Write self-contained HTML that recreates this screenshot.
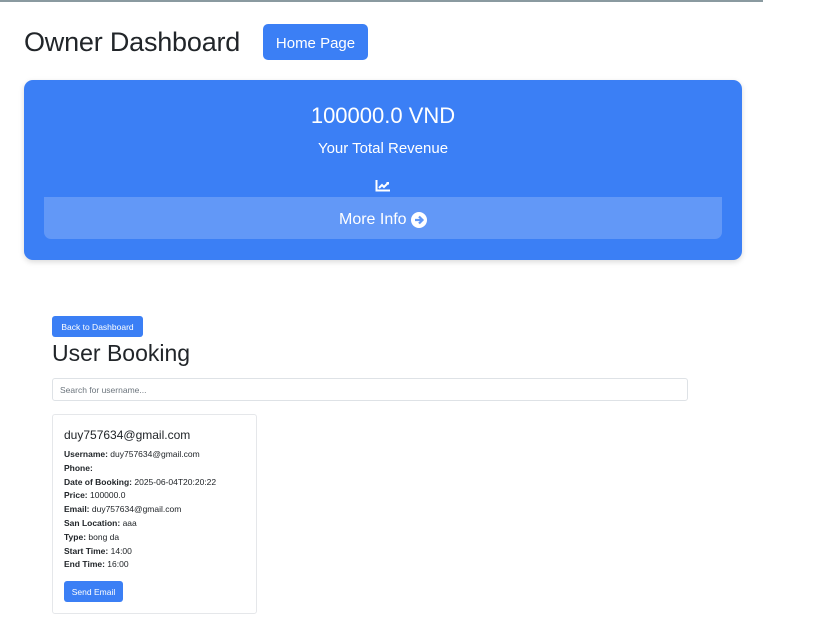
<!DOCTYPE html>
<html><head><style>
*{box-sizing:border-box;margin:0;padding:0}
body{width:817px;height:640px;background:#fff;font-family:"Liberation Sans",sans-serif;color:#212529;position:relative;overflow:hidden}
.a{position:absolute}
.btn{background:#3b7ff5;color:#fff;border-radius:4px;display:flex;align-items:center;justify-content:center}
</style></head><body>
<div class="a" style="left:0;top:0;width:763px;height:2px;background:#8a9aa0"></div>
<div class="a" style="left:24px;top:27px;font-size:27px;font-weight:500;letter-spacing:-0.2px">Owner Dashboard</div>
<div class="a btn" style="left:263px;top:24px;width:105px;height:36px;font-size:15px;border-radius:5px;padding-top:3px">Home Page</div>
<div class="a" style="left:24px;top:80px;width:718px;height:180px;background:#3b7ff5;border-radius:9px;box-shadow:0 2px 6px rgba(0,0,0,.15)"></div>
<div class="a" style="left:24px;top:103px;width:718px;text-align:center;color:#fff;font-size:22px;font-weight:500">100000.0 VND</div>
<div class="a" style="left:24px;top:140px;width:718px;text-align:center;color:#fff;font-size:15px">Your Total Revenue</div>
<svg class="a" style="left:375px;top:179px" width="16" height="13" viewBox="0 0 16 13"><path d="M1.5 1v10.5H15" stroke="#fff" stroke-width="2" fill="none"/><path d="M4 9l3-3 2 2 4-4" stroke="#fff" stroke-width="2" fill="none"/><path d="M11 3h3v3z" fill="#fff"/></svg>
<div class="a" style="left:44px;top:197px;width:678px;height:42px;background:#6298f7;border-radius:0 0 7px 7px;color:#fff;font-size:16px;display:flex;align-items:center;justify-content:center;padding-top:3px">More Info&nbsp;<svg width="16" height="16" viewBox="0 0 16 16"><circle cx="8" cy="8" r="8" fill="#fff"/><path d="M4 8h7M8 4.5L11.5 8 8 11.5" stroke="#6298f7" stroke-width="2.2" fill="none"/></svg></div>
<div class="a btn" style="left:52px;top:316px;width:91px;height:21px;font-size:8.5px;border-radius:3px">Back to Dashboard</div>
<div class="a" style="left:52px;top:340px;font-size:23px;font-weight:500">User Booking</div>
<div class="a" style="left:52px;top:378px;width:636px;height:23px;border:1px solid #dee2e6;border-radius:3px;font-size:8.5px;color:#6c757d;padding:6px 7px">Search for username...</div>
<div class="a" style="left:52px;top:414px;width:205px;height:200px;border:1px solid #e5e7ea;border-radius:3px"></div>
<div class="a" style="left:64px;top:428px;font-size:12px">duy757634@gmail.com</div>
<div class="a" style="left:64px;top:448px;font-size:8.5px;line-height:13.8px">
<b>Username:</b> duy757634@gmail.com<br><b>Phone:</b><br><b>Date of Booking:</b> 2025-06-04T20:20:22<br><b>Price:</b> 100000.0<br><b>Email:</b> duy757634@gmail.com<br><b>San Location:</b> aaa<br><b>Type:</b> bong da<br><b>Start Time:</b> 14:00<br><b>End Time:</b> 16:00</div>
<div class="a btn" style="left:64px;top:581px;width:59px;height:21px;font-size:8.5px;border-radius:3px">Send Email</div>
</body></html>
